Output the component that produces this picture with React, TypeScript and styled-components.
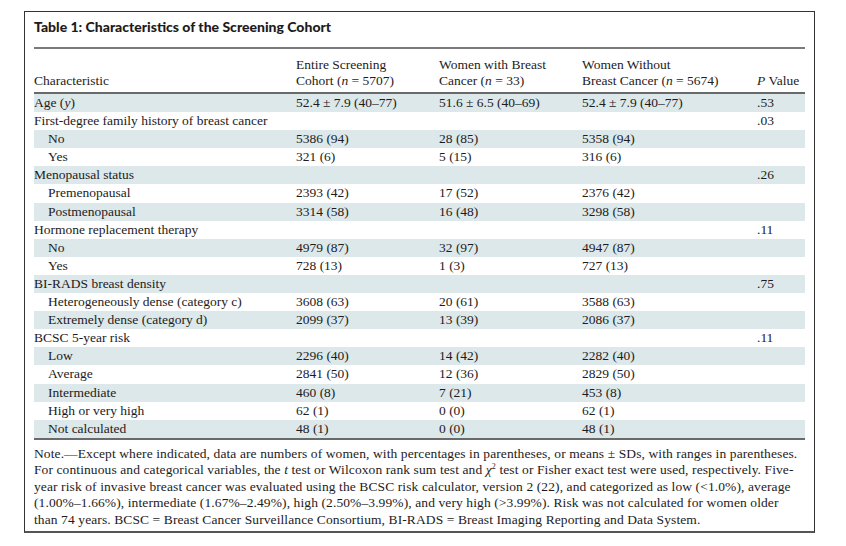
import React from 'react';
import styled, { createGlobalStyle } from 'styled-components';

const GlobalStyle = createGlobalStyle`
  html, body {
    margin: 0;
    padding: 0;
    background: #ffffff;
  }
  body {
    font-family: "Liberation Serif", "Times New Roman", serif;
    color: #1e1b1c;
  }
`;

const Page = styled.div`
  padding: 11px 0 0 24px;
`;

const Frame = styled.section`
  box-sizing: border-box;
  width: 791px;
  border: 1px solid #333333;
  border-bottom: 2px solid #555555;
  padding: 0 9px 3px 9px;
`;

const Title = styled.h1`
  margin: 0;
  padding: 5px 0 10px;
  font-family: Lato, "Open Sans", sans-serif;
  font-weight: 900;
  font-size: 14px;
  line-height: 20px;
  color: #1e1b1c;
  border-bottom: 2px solid #7a7a7a;
`;

const Table = styled.table`
  width: 100%;
  table-layout: fixed;
  border-collapse: collapse;
  font-size: 13.5px;
  border-bottom: 2px solid #6a6a6a;
`;

const HeadCell = styled.th`
  text-align: left;
  vertical-align: bottom;
  font-weight: 400;
  line-height: 16px;
  padding: 8px 0 3px;
  border-bottom: 2px solid #6a6a6a;
`;

const Row = styled.tr<{ $shaded: boolean }>`
  background: ${(p) => (p.$shaded ? '#dce8e9' : 'transparent')};
`;

const Cell = styled.td<{ $indent?: boolean }>`
  padding: 0 0 0 ${(p) => (p.$indent ? '14px' : '0')};
  height: 18.1px;
  line-height: 18.1px;
  white-space: nowrap;
`;

const Note = styled.p`
  margin: 0;
  padding-top: 6px;
  font-size: 13.5px;
  line-height: 16.5px;
  letter-spacing: 0.1px;
  white-space: nowrap;
`;

const Sup = styled.sup`
  font-size: 8px;
  line-height: 0;
`;

type Item = {
  label: string;
  sub?: boolean;
  a?: string;
  b?: string;
  c?: string;
  p?: string;
};

const rows: Item[] = [
  { label: 'Age (y)', a: '52.4 ± 7.9 (40–77)', b: '51.6 ± 6.5 (40–69)', c: '52.4 ± 7.9 (40–77)', p: '.53' },
  { label: 'First-degree family history of breast cancer', p: '.03' },
  { label: 'No', sub: true, a: '5386 (94)', b: '28 (85)', c: '5358 (94)' },
  { label: 'Yes', sub: true, a: '321 (6)', b: '5 (15)', c: '316 (6)' },
  { label: 'Menopausal status', p: '.26' },
  { label: 'Premenopausal', sub: true, a: '2393 (42)', b: '17 (52)', c: '2376 (42)' },
  { label: 'Postmenopausal', sub: true, a: '3314 (58)', b: '16 (48)', c: '3298 (58)' },
  { label: 'Hormone replacement therapy', p: '.11' },
  { label: 'No', sub: true, a: '4979 (87)', b: '32 (97)', c: '4947 (87)' },
  { label: 'Yes', sub: true, a: '728 (13)', b: '1 (3)', c: '727 (13)' },
  { label: 'BI-RADS breast density', p: '.75' },
  { label: 'Heterogeneously dense (category c)', sub: true, a: '3608 (63)', b: '20 (61)', c: '3588 (63)' },
  { label: 'Extremely dense (category d)', sub: true, a: '2099 (37)', b: '13 (39)', c: '2086 (37)' },
  { label: 'BCSC 5-year risk', p: '.11' },
  { label: 'Low', sub: true, a: '2296 (40)', b: '14 (42)', c: '2282 (40)' },
  { label: 'Average', sub: true, a: '2841 (50)', b: '12 (36)', c: '2829 (50)' },
  { label: 'Intermediate', sub: true, a: '460 (8)', b: '7 (21)', c: '453 (8)' },
  { label: 'High or very high', sub: true, a: '62 (1)', b: '0 (0)', c: '62 (1)' },
  { label: 'Not calculated', sub: true, a: '48 (1)', b: '0 (0)', c: '48 (1)' },
];

function Label({ text }: { text: string }) {
  // the "y" in "Age (y)" is set in italics
  if (text === 'Age (y)') {
    return (
      <>
        Age (<i>y</i>)
      </>
    );
  }
  return <>{text}</>;
}

export default function App() {
  return (
    <Page>
      <GlobalStyle />
      <Frame>
        <Title>Table 1: Characteristics of the Screening Cohort</Title>
        <Table>
          <colgroup>
            <col style={{ width: 262 }} />
            <col style={{ width: 143 }} />
            <col style={{ width: 143 }} />
            <col style={{ width: 175 }} />
            <col style={{ width: 48 }} />
          </colgroup>
          <thead>
            <tr>
              <HeadCell>Characteristic</HeadCell>
              <HeadCell>
                Entire Screening
                <br />
                Cohort (<i>n</i> = 5707)
              </HeadCell>
              <HeadCell>
                Women with Breast
                <br />
                Cancer (<i>n</i> = 33)
              </HeadCell>
              <HeadCell>
                Women Without
                <br />
                Breast Cancer (<i>n</i> = 5674)
              </HeadCell>
              <HeadCell>
                <i>P</i> Value
              </HeadCell>
            </tr>
          </thead>
          <tbody>
            {rows.map((r, i) => (
              <Row key={i} $shaded={i % 2 === 0}>
                <Cell $indent={r.sub}>
                  <Label text={r.label} />
                </Cell>
                <Cell>{r.a}</Cell>
                <Cell>{r.b}</Cell>
                <Cell>{r.c}</Cell>
                <Cell>{r.p}</Cell>
              </Row>
            ))}
          </tbody>
        </Table>
        <Note>
          Note.—Except where indicated, data are numbers of women, with percentages in parentheses, or means ± SDs, with ranges in parentheses.
          <br />
          For continuous and categorical variables, the <i>t</i> test or Wilcoxon rank sum test and <i>χ</i>
          <Sup>2</Sup> test or Fisher exact test were used, respectively. Five-
          <br />
          year risk of invasive breast cancer was evaluated using the BCSC risk calculator, version 2 (22), and categorized as low (&lt;1.0%), average
          <br />
          (1.00%–1.66%), intermediate (1.67%–2.49%), high (2.50%–3.99%), and very high (&gt;3.99%). Risk was not calculated for women older
          <br />
          than 74 years. BCSC = Breast Cancer Surveillance Consortium, BI-RADS = Breast Imaging Reporting and Data System.
        </Note>
      </Frame>
    </Page>
  );
}
